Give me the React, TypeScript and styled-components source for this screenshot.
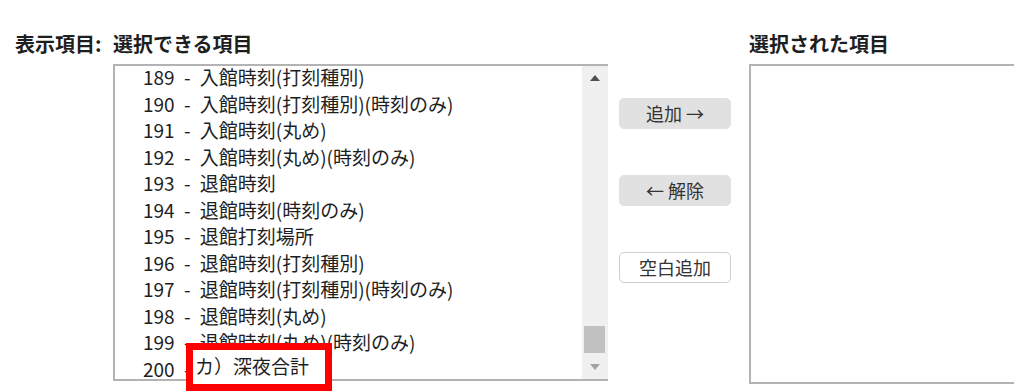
import React from "react";
import styled, { createGlobalStyle } from "styled-components";

const GlobalStyle = createGlobalStyle`
  html, body {
    margin: 0;
    padding: 0;
    background: #ffffff;
    overflow: hidden;
  }
  body {
    font-family: "Noto Sans CJK JP", "Noto Sans", sans-serif;
    color: #1e1e1e;
  }
`;

const Page = styled.div`
  position: relative;
  display: flex;
  align-items: flex-start;
  padding-top: 31px;
  width: 1014px;
  height: 391px;
  box-sizing: border-box;
  overflow: hidden;
`;

const FieldLabel = styled.div`
  width: 113px;
  padding-left: 15px;
  box-sizing: border-box;
  font-size: 20px;
  font-weight: bold;
  line-height: 26px;
  white-space: nowrap;
  flex-shrink: 0;
`;

const Section = styled.div<{ $width: number }>`
  display: flex;
  flex-direction: column;
  width: ${(p) => p.$width}px;
  flex-shrink: 0;
`;

const Title = styled.div`
  font-size: 20px;
  font-weight: bold;
  line-height: 26px;
  margin-bottom: 7px;
  white-space: nowrap;
`;

const ListBox = styled.div<{ $height: number; $scroll?: boolean }>`
  display: flex;
  height: ${(p) => p.$height}px;
  box-sizing: border-box;
  border: 2px solid #b3b3b3;
  border-right: ${(p) => (p.$scroll ? "none" : "2px solid #b3b3b3")};
  background: #ffffff;
  overflow: hidden;
`;

const Options = styled.div`
  flex: 1;
  overflow: hidden;
  margin-top: -2px;
`;

const Option = styled.div`
  height: 26.5px;
  line-height: 26.5px;
  padding-left: 28px;
  font-size: 19px;
  word-spacing: 5px;
  color: #1e1e1e;
  white-space: nowrap;
`;

const ScrollBar = styled.div`
  width: 26px;
  margin-top: -2px;
  margin-bottom: -2px;
  display: flex;
  flex-direction: column;
  background: #f0f0f0;
  flex-shrink: 0;
`;

const ArrowBox = styled.div`
  height: 28px;
  display: flex;
  align-items: center;
  justify-content: center;
  flex-shrink: 0;
`;

const Arrow = styled.div<{ $dir: "up" | "down"; $color: string }>`
  width: 0;
  height: 0;
  border-left: 5.5px solid transparent;
  border-right: 5.5px solid transparent;
  ${(p) =>
    p.$dir === "up"
      ? `border-bottom: 6px solid ${p.$color};`
      : `border-top: 6px solid ${p.$color};`}
`;

const Track = styled.div`
  flex: 1;
  display: flex;
  flex-direction: column;
  justify-content: flex-end;
  padding: 0 3px 0 2px;
`;

const Thumb = styled.div`
  height: 27px;
  background: #c1c1c1;
`;

const ButtonColumn = styled.div`
  display: flex;
  flex-direction: column;
  gap: 46px;
  width: 112px;
  margin-left: 11px;
  margin-right: 18px;
  padding-top: 67px;
  flex-shrink: 0;
`;

const ActionButton = styled.button<{ $plain?: boolean }>`
  height: 31px;
  width: 112px;
  padding: 0;
  border-radius: 5px;
  border: 1px solid ${(p) => (p.$plain ? "#cfcfcf" : "#e1e1e1")};
  background: ${(p) => (p.$plain ? "#ffffff" : "#e1e1e1")};
  color: #333333;
  font-family: "Noto Sans CJK JP", "Noto Sans", sans-serif;
  font-size: 18px;
  line-height: 29px;
  white-space: nowrap;
  cursor: pointer;
`;

const Highlight = styled.div`
  position: absolute;
  left: 186px;
  top: 343px;
  width: 146px;
  height: 48px;
  box-sizing: border-box;
  border: 7px solid #ff0000;
  background: #ffffff;
  padding-left: 2px;
  font-size: 19px;
  line-height: 32px;
  color: #1e1e1e;
  white-space: nowrap;
  overflow: hidden;
  pointer-events: none;
`;

const items = [
  "189 - 入館時刻(打刻種別)",
  "190 - 入館時刻(打刻種別)(時刻のみ)",
  "191 - 入館時刻(丸め)",
  "192 - 入館時刻(丸め)(時刻のみ)",
  "193 - 退館時刻",
  "194 - 退館時刻(時刻のみ)",
  "195 - 退館打刻場所",
  "196 - 退館時刻(打刻種別)",
  "197 - 退館時刻(打刻種別)(時刻のみ)",
  "198 - 退館時刻(丸め)",
  "199 - 退館時刻(丸め)(時刻のみ)",
  "200 -",
];

export default function App() {
  return (
    <>
      <GlobalStyle />
      <Page>
        <FieldLabel>表示項目:</FieldLabel>
        <Section $width={495}>
          <Title>選択できる項目</Title>
          <ListBox $height={317} $scroll>
            <Options>
              {items.map((t) => (
                <Option key={t}>{t}</Option>
              ))}
            </Options>
            <ScrollBar>
              <ArrowBox>
                <Arrow $dir="up" $color="#505050" />
              </ArrowBox>
              <Track>
                <Thumb />
              </Track>
              <ArrowBox>
                <Arrow $dir="down" $color="#a3a3a3" />
              </ArrowBox>
            </ScrollBar>
          </ListBox>
        </Section>
        <ButtonColumn>
          <ActionButton>追加 →</ActionButton>
          <ActionButton>← 解除</ActionButton>
          <ActionButton $plain>空白追加</ActionButton>
        </ButtonColumn>
        <Section $width={320}>
          <Title>選択された項目</Title>
          <ListBox $height={320} />
        </Section>
        <Highlight>カ）深夜合計</Highlight>
      </Page>
    </>
  );
}
